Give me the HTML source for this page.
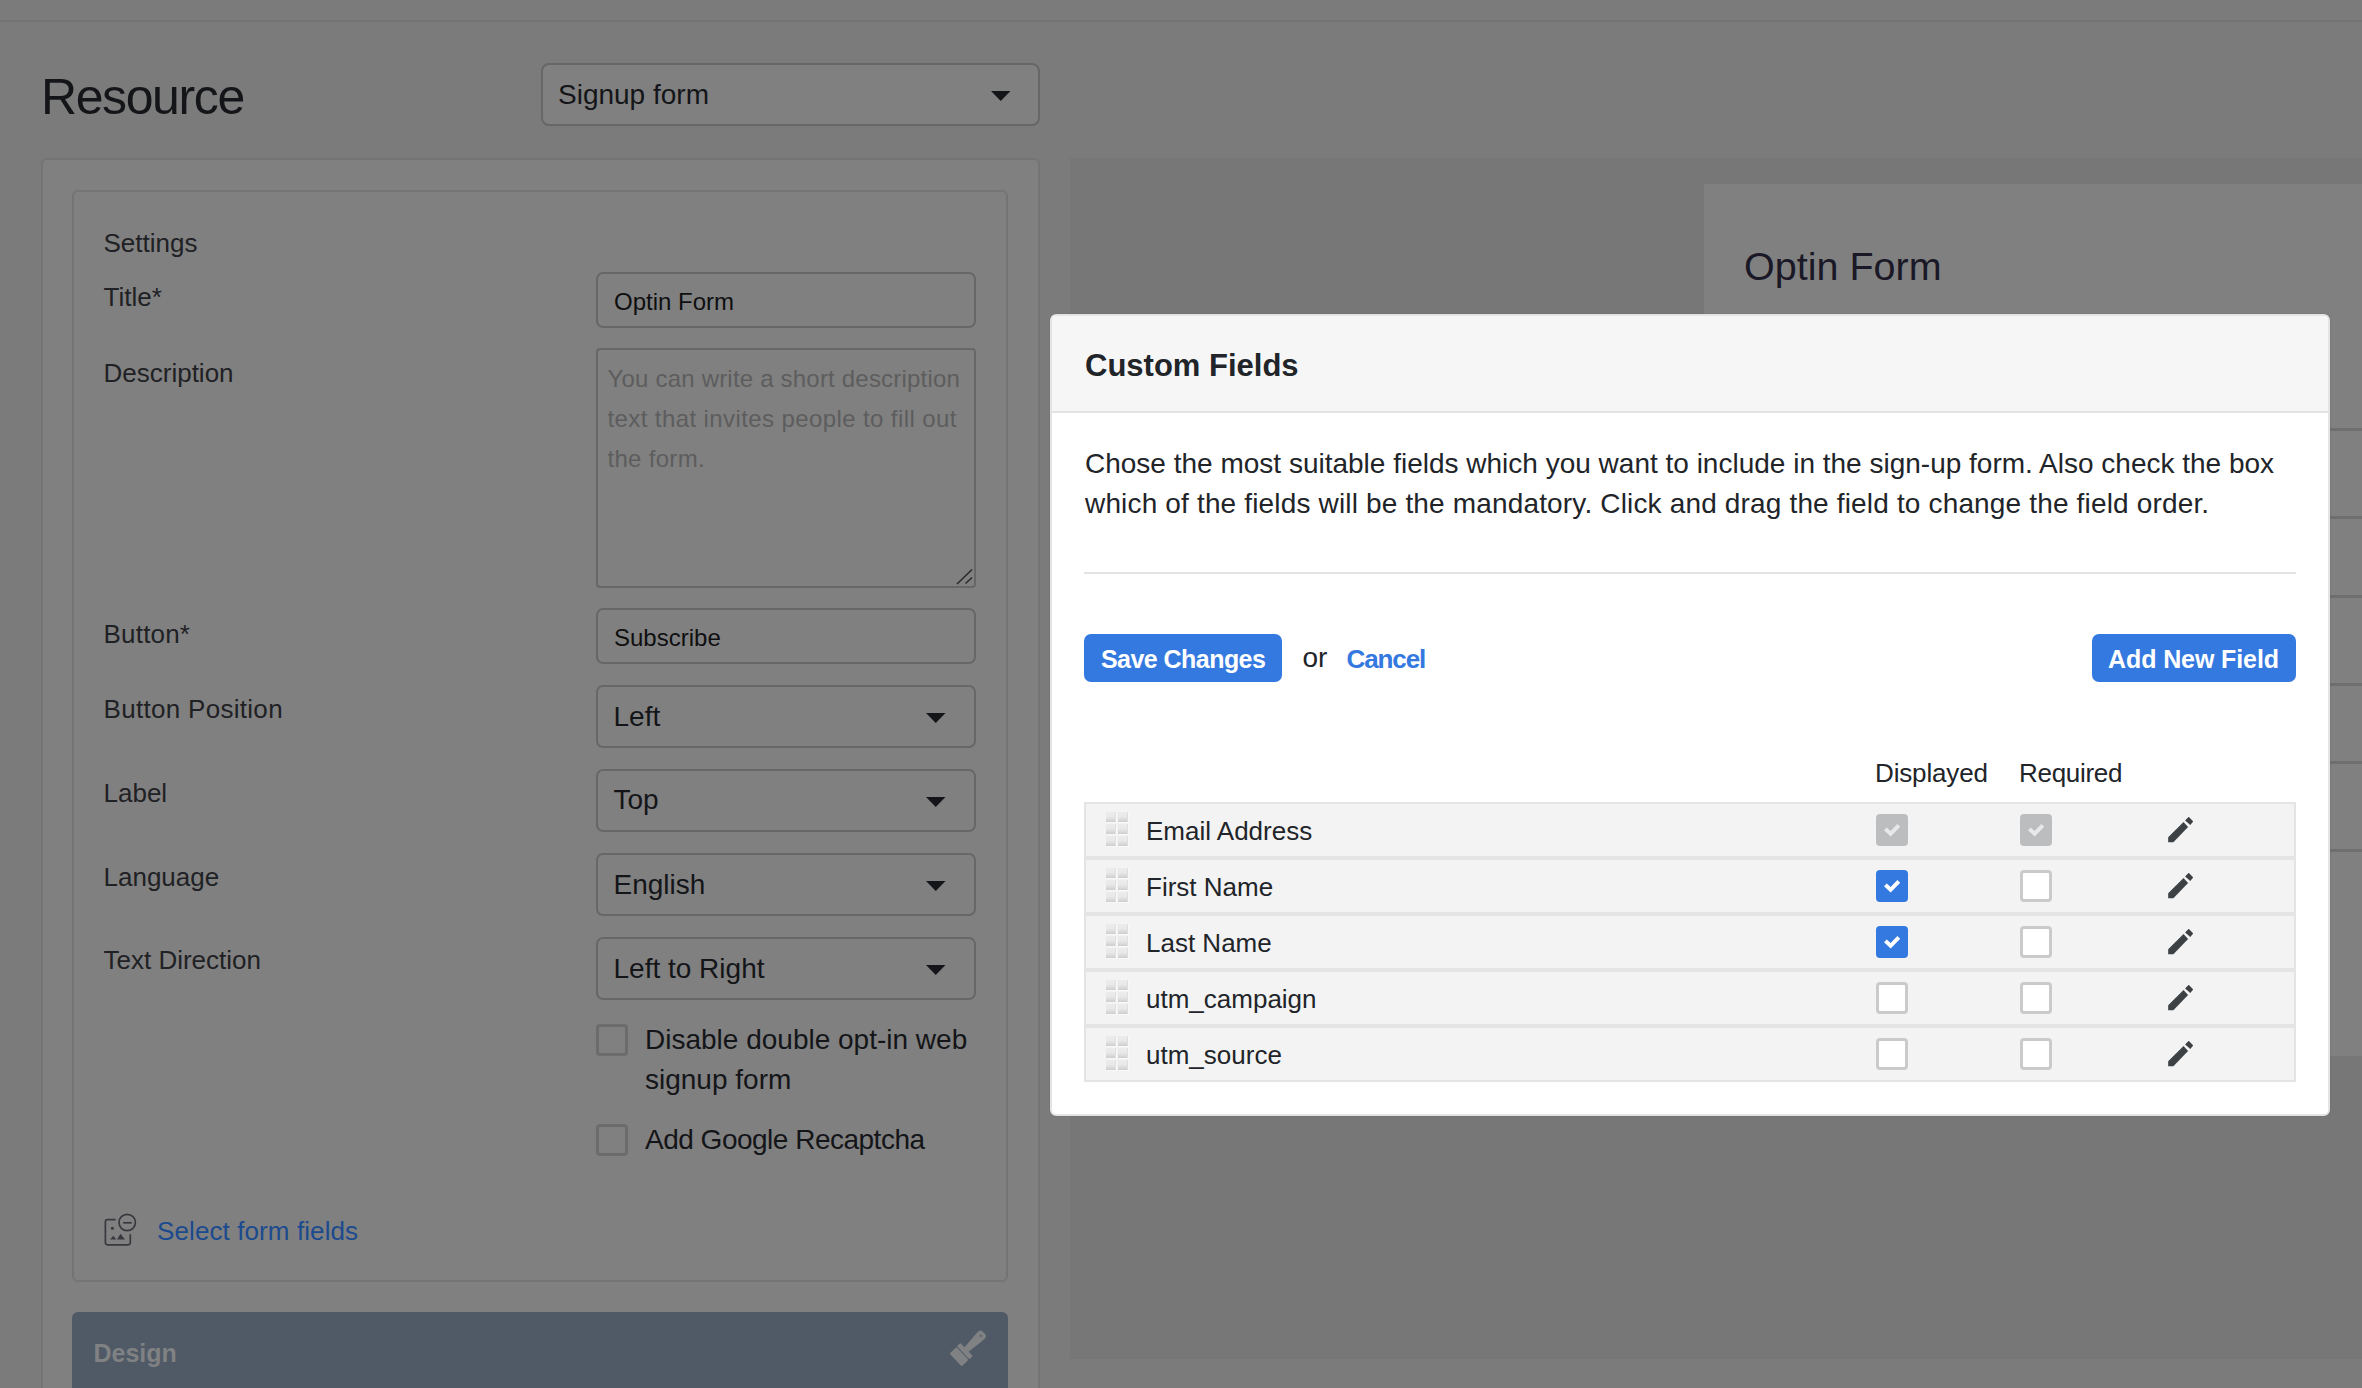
<!DOCTYPE html>
<html><head><meta charset="utf-8"><title>Custom Fields</title>
<style>
html,body{margin:0;padding:0;}
body{width:2362px;height:1388px;overflow:hidden;position:relative;background:#7b7b7b;font-family:"Liberation Sans",sans-serif;}
.t{position:absolute;white-space:nowrap;}
.b{position:absolute;}
</style></head><body>
<div class="b" style="left:0px;top:20px;width:2362px;height:2px;background:#737373"></div>
<div class="t" style="left:41px;top:72.17px;font-size:50px;line-height:50px;color:#141518;font-weight:normal;letter-spacing:-1.4px;">Resource</div>
<div class="b" style="left:541px;top:63px;width:499px;height:63px;border:2px solid #676767;border-radius:8px;background:#808080;box-sizing:border-box"></div>
<div class="t" style="left:558px;top:80.80px;font-size:28px;line-height:28px;color:#141518;font-weight:normal;">Signup form</div>
<svg class="b" style="left:990.5px;top:90.5px" width="19.5" height="10" viewBox="0 0 19.5 10"><polygon points="0,0 19.5,0 9.75,10" fill="#141518"/></svg>
<div class="b" style="left:41px;top:158px;width:999px;height:1242px;border:2px solid #747474;border-radius:6px;background:#808080;box-sizing:border-box"></div>
<div class="b" style="left:72px;top:190px;width:936px;height:1092px;border:2px solid #747474;border-radius:6px;background:#808080;box-sizing:border-box"></div>
<div class="t" style="left:103.5px;top:229.99px;font-size:26px;line-height:26px;color:#202124;font-weight:normal;">Settings</div>
<div class="t" style="left:103.5px;top:283.99px;font-size:26px;line-height:26px;color:#202124;font-weight:normal;">Title*</div>
<div class="t" style="left:103.5px;top:359.99px;font-size:26px;line-height:26px;color:#202124;font-weight:normal;">Description</div>
<div class="t" style="left:103.5px;top:620.59px;font-size:26px;line-height:26px;color:#202124;font-weight:normal;letter-spacing:0.2px;">Button*</div>
<div class="t" style="left:103.5px;top:695.99px;font-size:26px;line-height:26px;color:#202124;font-weight:normal;letter-spacing:0.3px;">Button Position</div>
<div class="t" style="left:103.5px;top:779.59px;font-size:26px;line-height:26px;color:#202124;font-weight:normal;">Label</div>
<div class="t" style="left:103.5px;top:863.99px;font-size:26px;line-height:26px;color:#202124;font-weight:normal;">Language</div>
<div class="t" style="left:103.5px;top:947.49px;font-size:26px;line-height:26px;color:#202124;font-weight:normal;">Text Direction</div>
<div class="b" style="left:596px;top:272px;width:380px;height:56px;border:2px solid #676767;border-radius:7px;background:#808080;box-sizing:border-box"></div>
<div class="t" style="left:614px;top:289.68px;font-size:24px;line-height:24px;color:#0f0f10;font-weight:normal;">Optin Form</div>
<div class="b" style="left:596px;top:348px;width:380px;height:240px;border:2px solid #676767;border-radius:4px;background:#808080;box-sizing:border-box"></div>
<div class="t" style="left:607.5px;top:367.38px;font-size:24px;line-height:24px;color:#5d5d5e;font-weight:normal;letter-spacing:0.2px;">You can write a short description</div>
<div class="t" style="left:607.5px;top:407.18px;font-size:24px;line-height:24px;color:#5d5d5e;font-weight:normal;letter-spacing:0.4px;">text that invites people to fill out</div>
<div class="t" style="left:607.5px;top:446.88px;font-size:24px;line-height:24px;color:#5d5d5e;font-weight:normal;letter-spacing:0.3px;">the form.</div>
<svg class="b" style="left:952px;top:566px" width="22" height="20" viewBox="0 0 22 20"><path d="M5,18 L20,3.5 M13.5,17.5 L20,11.5" stroke="#2b2b2b" stroke-width="1.6" fill="none"/></svg>
<div class="b" style="left:596px;top:608px;width:380px;height:56px;border:2px solid #676767;border-radius:7px;background:#808080;box-sizing:border-box"></div>
<div class="t" style="left:614px;top:625.88px;font-size:24px;line-height:24px;color:#0f0f10;font-weight:normal;">Subscribe</div>
<div class="b" style="left:596px;top:685px;width:380px;height:63px;border:2px solid #676767;border-radius:7px;background:#808080;box-sizing:border-box"></div>
<div class="t" style="left:613.5px;top:702.60px;font-size:28px;line-height:28px;color:#141518;font-weight:normal;">Left</div>
<svg class="b" style="left:926px;top:712.5px" width="19.5" height="10" viewBox="0 0 19.5 10"><polygon points="0,0 19.5,0 9.75,10" fill="#141518"/></svg>
<div class="b" style="left:596px;top:769px;width:380px;height:63px;border:2px solid #676767;border-radius:7px;background:#808080;box-sizing:border-box"></div>
<div class="t" style="left:613.5px;top:786.30px;font-size:28px;line-height:28px;color:#141518;font-weight:normal;">Top</div>
<svg class="b" style="left:926px;top:796.5px" width="19.5" height="10" viewBox="0 0 19.5 10"><polygon points="0,0 19.5,0 9.75,10" fill="#141518"/></svg>
<div class="b" style="left:596px;top:853px;width:380px;height:63px;border:2px solid #676767;border-radius:7px;background:#808080;box-sizing:border-box"></div>
<div class="t" style="left:613.5px;top:870.50px;font-size:28px;line-height:28px;color:#141518;font-weight:normal;">English</div>
<svg class="b" style="left:926px;top:880.5px" width="19.5" height="10" viewBox="0 0 19.5 10"><polygon points="0,0 19.5,0 9.75,10" fill="#141518"/></svg>
<div class="b" style="left:596px;top:937px;width:380px;height:63px;border:2px solid #676767;border-radius:7px;background:#808080;box-sizing:border-box"></div>
<div class="t" style="left:613.5px;top:954.60px;font-size:28px;line-height:28px;color:#141518;font-weight:normal;">Left to Right</div>
<svg class="b" style="left:926px;top:964.5px" width="19.5" height="10" viewBox="0 0 19.5 10"><polygon points="0,0 19.5,0 9.75,10" fill="#141518"/></svg>
<div class="b" style="left:596px;top:1024px;width:32px;height:32px;border:3px solid #6c6c6c;border-radius:4px;background:#808080;box-sizing:border-box"></div>
<div class="t" style="left:645px;top:1025.80px;font-size:28px;line-height:28px;color:#141518;font-weight:normal;">Disable double opt-in web</div>
<div class="t" style="left:645px;top:1066.00px;font-size:28px;line-height:28px;color:#141518;font-weight:normal;">signup form</div>
<div class="b" style="left:596px;top:1124px;width:32px;height:32px;border:3px solid #6c6c6c;border-radius:4px;background:#808080;box-sizing:border-box"></div>
<div class="t" style="left:645px;top:1126.30px;font-size:28px;line-height:28px;color:#141518;font-weight:normal;letter-spacing:-0.5px;">Add Google Recaptcha</div>
<svg class="b" style="left:98px;top:1206px" width="44" height="44" viewBox="0 0 44 44"><g fill="none" stroke="#38383e" stroke-width="1.7">
<path d="M17.7,13.6 H9.6 Q7.4,13.6 7.4,15.8 V36.6 Q7.4,38.8 9.6,38.8 H30.1 Q32.3,38.8 32.3,36.6 V28.2"/>
<circle cx="29.2" cy="16.5" r="8.2"/><path d="M25.2,16.8 H33.8"/></g>
<g fill="#38383e"><circle cx="14.4" cy="22.3" r="1.5"/><polygon points="12,33.6 15.4,29.8 18.3,33.6"/><polygon points="19,33.6 22.5,27.8 27,33.6"/></g></svg>
<div class="t" style="left:157px;top:1218.19px;font-size:26px;line-height:26px;color:#1b4a8e;font-weight:normal;letter-spacing:0.1px;">Select form fields</div>
<div class="b" style="left:72px;top:1312px;width:936px;height:88px;background:#4f5a66;border-radius:6px"></div>
<div class="t" style="left:93.5px;top:1340.84px;font-size:25px;line-height:25px;color:#7f8183;font-weight:bold;">Design</div>
<svg class="b" style="left:940px;top:1322px;filter:blur(0.5px)" width="56" height="56" viewBox="0 0 56 56"><g transform="translate(15.6,38) rotate(46.2) scale(1.06) translate(0,-37)" fill="#7f8183">
<path d="M-4.6,3.4 Q-4.6,0 -1.2,0 H1.2 Q4.6,0 4.6,3.4 L4.2,9 L2.8,23.2 H-2.8 L-4.2,9 Z"/>
<rect x="-8.6" y="22.6" width="17.2" height="4.6" rx="0.8"/>
<rect x="-8.3" y="28" width="16.6" height="9" rx="1.2"/>
<circle cx="0" cy="4" r="1.2" fill="#5f666e"/></g></svg>
<div class="b" style="left:1070px;top:158px;width:1292px;height:1201px;background:#777777"></div>
<div class="b" style="left:1704px;top:184px;width:658px;height:872px;background:#808080"></div>
<div class="t" style="left:1744px;top:247.06px;font-size:39.5px;line-height:39.5px;color:#1a1826;font-weight:normal;">Optin Form</div>
<div class="b" style="left:1744px;top:428px;width:618px;height:3px;background:#6f6f6f"></div>
<div class="b" style="left:1744px;top:516px;width:618px;height:3px;background:#6f6f6f"></div>
<div class="b" style="left:1744px;top:595px;width:618px;height:3px;background:#6f6f6f"></div>
<div class="b" style="left:1744px;top:683px;width:618px;height:3px;background:#6f6f6f"></div>
<div class="b" style="left:1744px;top:761px;width:618px;height:3px;background:#6f6f6f"></div>
<div class="b" style="left:1744px;top:849px;width:618px;height:3px;background:#6f6f6f"></div>

<div class="b" style="left:1050px;top:314px;width:1280px;height:802px;background:#fff;border:2px solid #e4e4e4;border-radius:6px;box-sizing:border-box;box-shadow:0 0 1px rgba(0,0,0,.35)"></div>
<div class="b" style="left:1052px;top:316px;width:1276px;height:95px;background:#f6f6f6;border-radius:4px 4px 0 0"></div>
<div class="b" style="left:1052px;top:411px;width:1276px;height:2px;background:#e3e3e3"></div>
<div class="t" style="left:1085px;top:349.76px;font-size:31px;line-height:31px;color:#212428;font-weight:bold;">Custom Fields</div>
<div class="t" style="left:1085px;top:450.30px;font-size:28px;line-height:28px;color:#212428;font-weight:normal;">Chose the most suitable fields which you want to include in the sign-up form. Also check the box</div>
<div class="t" style="left:1085px;top:490.30px;font-size:28px;line-height:28px;color:#212428;font-weight:normal;letter-spacing:0.16px;">which of the fields will be the mandatory. Click and drag the field to change the field order.</div>
<div class="b" style="left:1084px;top:572px;width:1212px;height:2px;background:#e4e4e4"></div>
<div class="b" style="left:1084px;top:634px;width:198px;height:48px;background:#3479e0;border-radius:7px"></div>
<div class="t" style="left:1101px;top:646.84px;font-size:25px;line-height:25px;color:#fff;font-weight:bold;letter-spacing:-0.55px;">Save Changes</div>
<div class="t" style="left:1302.5px;top:644.30px;font-size:28px;line-height:28px;color:#212428;font-weight:normal;">or</div>
<div class="t" style="left:1346.5px;top:645.99px;font-size:26px;line-height:26px;color:#3479e0;font-weight:bold;letter-spacing:-1.1px;">Cancel</div>
<div class="b" style="left:2092px;top:634px;width:204px;height:48px;background:#3479e0;border-radius:7px"></div>
<div class="t" style="left:2108px;top:646.84px;font-size:25px;line-height:25px;color:#fff;font-weight:bold;letter-spacing:-0.1px;">Add New Field</div>
<div class="t" style="left:1875px;top:759.99px;font-size:26px;line-height:26px;color:#212428;font-weight:normal;letter-spacing:-0.15px;">Displayed</div>
<div class="t" style="left:2019px;top:759.99px;font-size:26px;line-height:26px;color:#212428;font-weight:normal;letter-spacing:-0.3px;">Required</div>
<div class="b" style="left:1084px;top:802px;width:1212px;height:280px;background:#e4e4e4"></div>
<div class="b" style="left:1086px;top:804px;width:1208px;height:52px;background:#f3f3f3"></div>
<div class="b" style="left:1106.0px;top:812px;width:10.0px;height:10px;background:linear-gradient(180deg,#ececec 0,#e8e8e8 50%,#d9d9d9 78%,#cdcdcd 100%);box-shadow:inset -1px 0 0 #dedede, 1px 1px 0 #f9f9f9"></div>
<div class="b" style="left:1118.3px;top:812px;width:10.0px;height:10px;background:linear-gradient(180deg,#ececec 0,#e8e8e8 50%,#d9d9d9 78%,#cdcdcd 100%);box-shadow:inset -1px 0 0 #dedede, 1px 1px 0 #f9f9f9"></div>
<div class="b" style="left:1106.0px;top:824px;width:10.0px;height:10px;background:linear-gradient(180deg,#ececec 0,#e8e8e8 50%,#d9d9d9 78%,#cdcdcd 100%);box-shadow:inset -1px 0 0 #dedede, 1px 1px 0 #f9f9f9"></div>
<div class="b" style="left:1118.3px;top:824px;width:10.0px;height:10px;background:linear-gradient(180deg,#ececec 0,#e8e8e8 50%,#d9d9d9 78%,#cdcdcd 100%);box-shadow:inset -1px 0 0 #dedede, 1px 1px 0 #f9f9f9"></div>
<div class="b" style="left:1106.0px;top:836px;width:10.0px;height:10px;background:linear-gradient(180deg,#ececec 0,#e8e8e8 50%,#d9d9d9 78%,#cdcdcd 100%);box-shadow:inset -1px 0 0 #dedede, 1px 1px 0 #f9f9f9"></div>
<div class="b" style="left:1118.3px;top:836px;width:10.0px;height:10px;background:linear-gradient(180deg,#ececec 0,#e8e8e8 50%,#d9d9d9 78%,#cdcdcd 100%);box-shadow:inset -1px 0 0 #dedede, 1px 1px 0 #f9f9f9"></div>
<div class="t" style="left:1146px;top:817.79px;font-size:26px;line-height:26px;color:#212428;font-weight:normal;">Email Address</div>
<svg class="b" style="left:1876px;top:814px" width="32" height="32" viewBox="0 0 32 32"><rect x="0" y="0" width="32" height="32" rx="4" fill="#bcbdbf"/><polyline points="9.4,14.9 14.6,19.8 22.8,11.3" fill="none" stroke="#e8e8e9" stroke-width="4"/></svg>
<svg class="b" style="left:2020px;top:814px" width="32" height="32" viewBox="0 0 32 32"><rect x="0" y="0" width="32" height="32" rx="4" fill="#bcbdbf"/><polyline points="9.4,14.9 14.6,19.8 22.8,11.3" fill="none" stroke="#e8e8e9" stroke-width="4"/></svg>
<svg class="b" style="left:2160px;top:810px" width="40" height="40" viewBox="0 0 40 40"><g fill="#3d4144"><polygon points="8.2,27.2 23.5,12.1 28.1,17.0 13.4,32.3 8.2,32.3"/><path d="M25.1,10.4 L28.2,7.3 Q28.7,6.9 29.2,7.3 L32.8,10.9 Q33.3,11.5 32.8,12.1 L30.3,15.0 Z"/></g></svg>
<div class="b" style="left:1086px;top:860px;width:1208px;height:52px;background:#f3f3f3"></div>
<div class="b" style="left:1106.0px;top:868px;width:10.0px;height:10px;background:linear-gradient(180deg,#ececec 0,#e8e8e8 50%,#d9d9d9 78%,#cdcdcd 100%);box-shadow:inset -1px 0 0 #dedede, 1px 1px 0 #f9f9f9"></div>
<div class="b" style="left:1118.3px;top:868px;width:10.0px;height:10px;background:linear-gradient(180deg,#ececec 0,#e8e8e8 50%,#d9d9d9 78%,#cdcdcd 100%);box-shadow:inset -1px 0 0 #dedede, 1px 1px 0 #f9f9f9"></div>
<div class="b" style="left:1106.0px;top:880px;width:10.0px;height:10px;background:linear-gradient(180deg,#ececec 0,#e8e8e8 50%,#d9d9d9 78%,#cdcdcd 100%);box-shadow:inset -1px 0 0 #dedede, 1px 1px 0 #f9f9f9"></div>
<div class="b" style="left:1118.3px;top:880px;width:10.0px;height:10px;background:linear-gradient(180deg,#ececec 0,#e8e8e8 50%,#d9d9d9 78%,#cdcdcd 100%);box-shadow:inset -1px 0 0 #dedede, 1px 1px 0 #f9f9f9"></div>
<div class="b" style="left:1106.0px;top:892px;width:10.0px;height:10px;background:linear-gradient(180deg,#ececec 0,#e8e8e8 50%,#d9d9d9 78%,#cdcdcd 100%);box-shadow:inset -1px 0 0 #dedede, 1px 1px 0 #f9f9f9"></div>
<div class="b" style="left:1118.3px;top:892px;width:10.0px;height:10px;background:linear-gradient(180deg,#ececec 0,#e8e8e8 50%,#d9d9d9 78%,#cdcdcd 100%);box-shadow:inset -1px 0 0 #dedede, 1px 1px 0 #f9f9f9"></div>
<div class="t" style="left:1146px;top:873.79px;font-size:26px;line-height:26px;color:#212428;font-weight:normal;">First Name</div>
<svg class="b" style="left:1876px;top:870px" width="32" height="32" viewBox="0 0 32 32"><rect x="0" y="0" width="32" height="32" rx="4" fill="#3479e0"/><polyline points="9.4,14.9 14.6,19.8 22.8,11.3" fill="none" stroke="#fff" stroke-width="4"/></svg>
<div class="b" style="left:2020px;top:870px;width:32px;height:32px;background:#fff;border:3px solid #c9cacc;border-radius:4px;box-sizing:border-box"></div>
<svg class="b" style="left:2160px;top:866px" width="40" height="40" viewBox="0 0 40 40"><g fill="#3d4144"><polygon points="8.2,27.2 23.5,12.1 28.1,17.0 13.4,32.3 8.2,32.3"/><path d="M25.1,10.4 L28.2,7.3 Q28.7,6.9 29.2,7.3 L32.8,10.9 Q33.3,11.5 32.8,12.1 L30.3,15.0 Z"/></g></svg>
<div class="b" style="left:1086px;top:916px;width:1208px;height:52px;background:#f3f3f3"></div>
<div class="b" style="left:1106.0px;top:924px;width:10.0px;height:10px;background:linear-gradient(180deg,#ececec 0,#e8e8e8 50%,#d9d9d9 78%,#cdcdcd 100%);box-shadow:inset -1px 0 0 #dedede, 1px 1px 0 #f9f9f9"></div>
<div class="b" style="left:1118.3px;top:924px;width:10.0px;height:10px;background:linear-gradient(180deg,#ececec 0,#e8e8e8 50%,#d9d9d9 78%,#cdcdcd 100%);box-shadow:inset -1px 0 0 #dedede, 1px 1px 0 #f9f9f9"></div>
<div class="b" style="left:1106.0px;top:936px;width:10.0px;height:10px;background:linear-gradient(180deg,#ececec 0,#e8e8e8 50%,#d9d9d9 78%,#cdcdcd 100%);box-shadow:inset -1px 0 0 #dedede, 1px 1px 0 #f9f9f9"></div>
<div class="b" style="left:1118.3px;top:936px;width:10.0px;height:10px;background:linear-gradient(180deg,#ececec 0,#e8e8e8 50%,#d9d9d9 78%,#cdcdcd 100%);box-shadow:inset -1px 0 0 #dedede, 1px 1px 0 #f9f9f9"></div>
<div class="b" style="left:1106.0px;top:948px;width:10.0px;height:10px;background:linear-gradient(180deg,#ececec 0,#e8e8e8 50%,#d9d9d9 78%,#cdcdcd 100%);box-shadow:inset -1px 0 0 #dedede, 1px 1px 0 #f9f9f9"></div>
<div class="b" style="left:1118.3px;top:948px;width:10.0px;height:10px;background:linear-gradient(180deg,#ececec 0,#e8e8e8 50%,#d9d9d9 78%,#cdcdcd 100%);box-shadow:inset -1px 0 0 #dedede, 1px 1px 0 #f9f9f9"></div>
<div class="t" style="left:1146px;top:929.79px;font-size:26px;line-height:26px;color:#212428;font-weight:normal;">Last Name</div>
<svg class="b" style="left:1876px;top:926px" width="32" height="32" viewBox="0 0 32 32"><rect x="0" y="0" width="32" height="32" rx="4" fill="#3479e0"/><polyline points="9.4,14.9 14.6,19.8 22.8,11.3" fill="none" stroke="#fff" stroke-width="4"/></svg>
<div class="b" style="left:2020px;top:926px;width:32px;height:32px;background:#fff;border:3px solid #c9cacc;border-radius:4px;box-sizing:border-box"></div>
<svg class="b" style="left:2160px;top:922px" width="40" height="40" viewBox="0 0 40 40"><g fill="#3d4144"><polygon points="8.2,27.2 23.5,12.1 28.1,17.0 13.4,32.3 8.2,32.3"/><path d="M25.1,10.4 L28.2,7.3 Q28.7,6.9 29.2,7.3 L32.8,10.9 Q33.3,11.5 32.8,12.1 L30.3,15.0 Z"/></g></svg>
<div class="b" style="left:1086px;top:972px;width:1208px;height:52px;background:#f3f3f3"></div>
<div class="b" style="left:1106.0px;top:980px;width:10.0px;height:10px;background:linear-gradient(180deg,#ececec 0,#e8e8e8 50%,#d9d9d9 78%,#cdcdcd 100%);box-shadow:inset -1px 0 0 #dedede, 1px 1px 0 #f9f9f9"></div>
<div class="b" style="left:1118.3px;top:980px;width:10.0px;height:10px;background:linear-gradient(180deg,#ececec 0,#e8e8e8 50%,#d9d9d9 78%,#cdcdcd 100%);box-shadow:inset -1px 0 0 #dedede, 1px 1px 0 #f9f9f9"></div>
<div class="b" style="left:1106.0px;top:992px;width:10.0px;height:10px;background:linear-gradient(180deg,#ececec 0,#e8e8e8 50%,#d9d9d9 78%,#cdcdcd 100%);box-shadow:inset -1px 0 0 #dedede, 1px 1px 0 #f9f9f9"></div>
<div class="b" style="left:1118.3px;top:992px;width:10.0px;height:10px;background:linear-gradient(180deg,#ececec 0,#e8e8e8 50%,#d9d9d9 78%,#cdcdcd 100%);box-shadow:inset -1px 0 0 #dedede, 1px 1px 0 #f9f9f9"></div>
<div class="b" style="left:1106.0px;top:1004px;width:10.0px;height:10px;background:linear-gradient(180deg,#ececec 0,#e8e8e8 50%,#d9d9d9 78%,#cdcdcd 100%);box-shadow:inset -1px 0 0 #dedede, 1px 1px 0 #f9f9f9"></div>
<div class="b" style="left:1118.3px;top:1004px;width:10.0px;height:10px;background:linear-gradient(180deg,#ececec 0,#e8e8e8 50%,#d9d9d9 78%,#cdcdcd 100%);box-shadow:inset -1px 0 0 #dedede, 1px 1px 0 #f9f9f9"></div>
<div class="t" style="left:1146px;top:985.79px;font-size:26px;line-height:26px;color:#212428;font-weight:normal;">utm_campaign</div>
<div class="b" style="left:1876px;top:982px;width:32px;height:32px;background:#fff;border:3px solid #c9cacc;border-radius:4px;box-sizing:border-box"></div>
<div class="b" style="left:2020px;top:982px;width:32px;height:32px;background:#fff;border:3px solid #c9cacc;border-radius:4px;box-sizing:border-box"></div>
<svg class="b" style="left:2160px;top:978px" width="40" height="40" viewBox="0 0 40 40"><g fill="#3d4144"><polygon points="8.2,27.2 23.5,12.1 28.1,17.0 13.4,32.3 8.2,32.3"/><path d="M25.1,10.4 L28.2,7.3 Q28.7,6.9 29.2,7.3 L32.8,10.9 Q33.3,11.5 32.8,12.1 L30.3,15.0 Z"/></g></svg>
<div class="b" style="left:1086px;top:1028px;width:1208px;height:52px;background:#f3f3f3"></div>
<div class="b" style="left:1106.0px;top:1036px;width:10.0px;height:10px;background:linear-gradient(180deg,#ececec 0,#e8e8e8 50%,#d9d9d9 78%,#cdcdcd 100%);box-shadow:inset -1px 0 0 #dedede, 1px 1px 0 #f9f9f9"></div>
<div class="b" style="left:1118.3px;top:1036px;width:10.0px;height:10px;background:linear-gradient(180deg,#ececec 0,#e8e8e8 50%,#d9d9d9 78%,#cdcdcd 100%);box-shadow:inset -1px 0 0 #dedede, 1px 1px 0 #f9f9f9"></div>
<div class="b" style="left:1106.0px;top:1048px;width:10.0px;height:10px;background:linear-gradient(180deg,#ececec 0,#e8e8e8 50%,#d9d9d9 78%,#cdcdcd 100%);box-shadow:inset -1px 0 0 #dedede, 1px 1px 0 #f9f9f9"></div>
<div class="b" style="left:1118.3px;top:1048px;width:10.0px;height:10px;background:linear-gradient(180deg,#ececec 0,#e8e8e8 50%,#d9d9d9 78%,#cdcdcd 100%);box-shadow:inset -1px 0 0 #dedede, 1px 1px 0 #f9f9f9"></div>
<div class="b" style="left:1106.0px;top:1060px;width:10.0px;height:10px;background:linear-gradient(180deg,#ececec 0,#e8e8e8 50%,#d9d9d9 78%,#cdcdcd 100%);box-shadow:inset -1px 0 0 #dedede, 1px 1px 0 #f9f9f9"></div>
<div class="b" style="left:1118.3px;top:1060px;width:10.0px;height:10px;background:linear-gradient(180deg,#ececec 0,#e8e8e8 50%,#d9d9d9 78%,#cdcdcd 100%);box-shadow:inset -1px 0 0 #dedede, 1px 1px 0 #f9f9f9"></div>
<div class="t" style="left:1146px;top:1041.79px;font-size:26px;line-height:26px;color:#212428;font-weight:normal;">utm_source</div>
<div class="b" style="left:1876px;top:1038px;width:32px;height:32px;background:#fff;border:3px solid #c9cacc;border-radius:4px;box-sizing:border-box"></div>
<div class="b" style="left:2020px;top:1038px;width:32px;height:32px;background:#fff;border:3px solid #c9cacc;border-radius:4px;box-sizing:border-box"></div>
<svg class="b" style="left:2160px;top:1034px" width="40" height="40" viewBox="0 0 40 40"><g fill="#3d4144"><polygon points="8.2,27.2 23.5,12.1 28.1,17.0 13.4,32.3 8.2,32.3"/><path d="M25.1,10.4 L28.2,7.3 Q28.7,6.9 29.2,7.3 L32.8,10.9 Q33.3,11.5 32.8,12.1 L30.3,15.0 Z"/></g></svg>

</body></html>
